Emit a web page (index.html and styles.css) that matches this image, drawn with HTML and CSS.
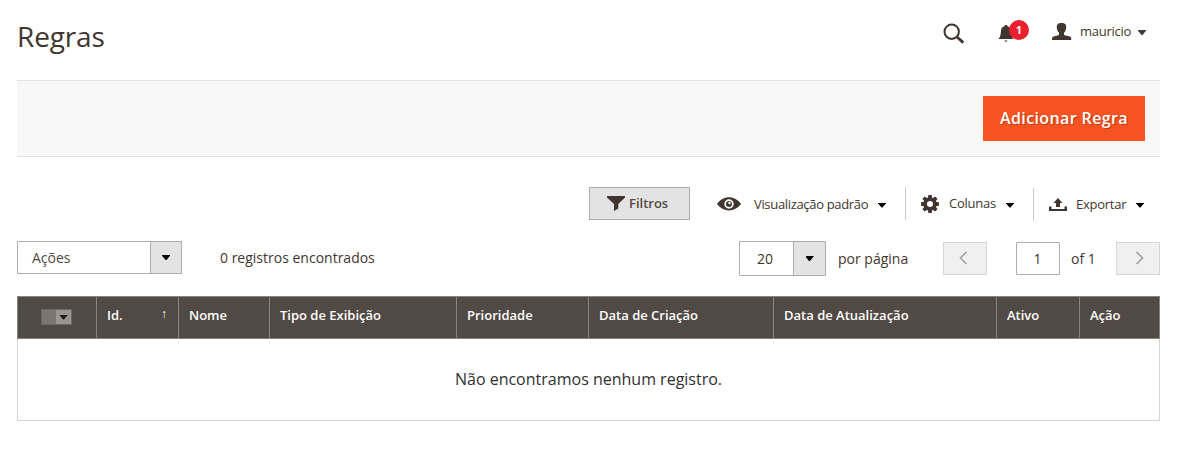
FILE: index.html
```html
<!DOCTYPE html>
<html lang="pt-BR">
<head>
<meta charset="utf-8">
<title>Regras</title>
<link rel="stylesheet" href="styles.css">
</head>
<body>
<div class="page">
  <header class="header">
    <h1 class="title">Regras</h1>
    <div class="tools">
      <svg class="search" width="22" height="22" viewBox="0 0 22 22"><circle cx="8.7" cy="8.7" r="7.2" fill="none" stroke="#41362f" stroke-width="2"/><path d="M14 14l6.300 5.600" stroke="#41362f" stroke-width="2.800"/></svg>
      <div class="bell">
        <svg width="16" height="18" viewBox="0 0 16 18"><path d="M6.500 1.200C6.500-.3 9.500-.3 9.500 1.200c2.800.6 3.500 2.400 3.700 5.100.2 3.700.8 5.700 2.300 7.700H.500c1.800-2 2.200-4 2.400-7.700.2-2.700.8-4.500 3.600-5.100zM6.300 15.500h3.200q-1.600 2.500-3.200 0z" fill="#41362f"/></svg>
        <span class="badge">1</span>
      </div>
      <svg class="avatar" width="20" height="18" viewBox="0 0 20 18"><path d="M9.500 0c3.800 0 5 2 4.700 4.800-.2 2.200-1 3.800-2.200 5v2c.5.8 3 .9 5.200 1.500 1.700.5 2.100 1.200 2.100 3.700H0c0-2.500.4-3.200 2-3.700 2.200-.6 4.600-.7 5-1.500v-2C5.800 8.600 5 7 4.800 4.800 4.500 2 5.700 0 9.500 0z" fill="#41362f"/></svg>
      <span class="user">mauricio</span>
      <i class="caret brown"></i>
    </div>
  </header>
  <div class="actions"><button class="primary">Adicionar Regra</button></div>
  <div class="controls">
    <button class="filters"><svg width="18" height="15" viewBox="0 0 18 15"><path d="M0 0h18v1.500L11.300 8v4.500L7 15V8L0 1.500z" fill="#41362f"/></svg><span>Filtros</span></button>
    <div class="control view">
      <svg width="24" height="14" viewBox="0 0 24 14"><path fill-rule="evenodd" d="M0 7C6-2 18-2 24 7 18 15.500 6 15.500 0 7zM12 2.300a4.700 4.700 0 1 0 0 9.400 4.700 4.700 0 0 0 0-9.400z" fill="#41362f"/><circle cx="12" cy="7" r="3" fill="#41362f"/><circle cx="12.500" cy="6" r="1.200" fill="#fff"/></svg>
      <span>Visualização padrão</span><i class="caret"></i>
    </div>
    <div class="control columns">
      <svg width="18" height="18" viewBox="0 0 18 18"><g fill="#41362f"><path id="tooth" d="M7.300 0h3.400l.5 4H6.800zM7.300 18h3.400l.5-4H6.800z"/><use href="#tooth" transform="rotate(45 9 9)"/><use href="#tooth" transform="rotate(90 9 9)"/><use href="#tooth" transform="rotate(135 9 9)"/></g><circle cx="9" cy="9" r="4.900" fill="none" stroke="#41362f" stroke-width="3.800"/></svg>
      <span>Colunas</span><i class="caret"></i>
    </div>
    <div class="control export">
      <svg width="18" height="14" viewBox="0 0 18 14"><path d="M9 0l4.500 5H11v4H7V5H4.500zM0 8.500h2.500V11h13V8.500H18V13H0z" fill="#41362f"/></svg>
      <span>Exportar</span><i class="caret"></i>
    </div>
  </div>
  <div class="paging">
    <div class="select bulk"><span class="value">Ações</span><span class="arrow"><i class="caret"></i></span></div>
    <span class="count">0 registros encontrados</span>
    <div class="select size"><span class="value">20</span><span class="arrow"><i class="caret"></i></span></div>
    <span class="per">por página</span>
    <button class="step prev"><svg width="9" height="14" viewBox="0 0 9 14"><path d="M7.500 1L1.500 7l6 6" fill="none" stroke="#a5a2a0" stroke-width="1.700"/></svg></button>
    <div class="current">1</div>
    <span class="total">of 1</span>
    <button class="step next"><svg width="9" height="14" viewBox="0 0 9 14"><path d="M1.500 1l6 6-6 6" fill="none" stroke="#a5a2a0" stroke-width="1.700"/></svg></button>
  </div>
  <div class="grid">
    <div class="head">
      <div class="th check"><span class="multi"><span><i class="caret"></i></span></span></div>
      <div class="th sorted"><span>Id.</span><span class="sort">↑</span></div>
      <div class="th">Nome</div>
      <div class="th">Tipo de Exibição</div>
      <div class="th">Prioridade</div>
      <div class="th">Data de Criação</div>
      <div class="th">Data de Atualização</div>
      <div class="th">Ativo</div>
      <div class="th">Ação</div>
    </div>
    <div class="empty"><span>Não encontramos nenhum registro.</span></div>
  </div>
</div>
</body>
</html>
```
FILE: styles.css
```css
* { box-sizing: border-box; }
body { margin: 0; background: #fff; color: #41362f; font: 14px "Open Sans", "Noto Sans", sans-serif; white-space: nowrap; }
button { font: inherit; color: inherit; margin: 0; padding: 0; border-radius: 0; }
svg { display: block; flex: none; }
.page { width: 1143px; margin-left: 17px; }
.caret { flex: none; width: 8px; height: 5px; background: #000; clip-path: polygon(0 0, 100% 0, 100% 15%, 56% 100%, 44% 100%, 0 15%); }
.caret.brown { background: #41362f; }

.header { display: flex; justify-content: space-between; height: 80px; }
.title { margin: 16px 0 0; font-size: 28px; line-height: 40px; font-weight: 400; letter-spacing: -.15px; }
.tools { display: flex; align-items: flex-start; width: 217px; }
.search { margin-top: 23px; }
.bell { position: relative; margin: 25px 0 0 33px; }
.badge { position: absolute; left: 11px; top: -5px; width: 20px; height: 20px; border-radius: 50%; background: #eb202e; color: #fff; font-size: 11px; font-weight: 700; line-height: 20px; text-align: center; }
.avatar { margin: 23px 0 0 38px; }
.user { width: 51px; margin: 22px 7px 0 8px; font-size: 13px; line-height: 18px; letter-spacing: -.25px; }
.tools .caret { margin-top: 30px; }

.actions { display: flex; justify-content: flex-end; height: 77px; padding: 15px 15px 0 0; border: solid #e3e3e3; border-width: 1px 0; background: #f8f8f8; }
.primary { width: 162px; height: 45px; padding-bottom: 2px; border: 0; background: #f55321; color: #fff; font-size: 16px; font-weight: 600; letter-spacing: .38px; text-shadow: 1px 1px 0 rgba(0,0,0,.25); }

.controls { display: flex; height: 84px; padding: 30px 0 0 572px; font-size: 13px; }
.filters { display: flex; align-items: center; width: 101px; height: 33px; padding-left: 17px; border: 1px solid #adadad; background: #e3e3e3; color: #514943; font-weight: 600; }
.filters span { margin: -2px 0 0 4px; }
.control { display: flex; align-items: center; height: 33px; }
.control span { flex: none; line-height: 18px; letter-spacing: -.25px; }
.view { width: 215px; padding-left: 27px; }
.view span { width: 114px; margin: 0 10px 0 13px; letter-spacing: -.33px; }
.view .caret, .columns .caret { margin-top: 3px; }
.export .caret { margin-top: 1px; }
.columns { width: 128px; padding-left: 15px; border-left: 1px solid #ccc; }
.columns span { width: 47px; margin: -2px 10px 0; }
.export { padding-left: 15px; margin-top: 1px; border-left: 1px solid #ccc; }
.export span { width: 50px; margin: -2px 10px 0 9px; }

.paging { display: flex; height: 55px; }
.select { display: flex; border: 1px solid #adadad; flex: none; }
.value { display: flex; align-items: center; flex: 1; }
.arrow { display: flex; align-items: center; justify-content: center; width: 31px; border-left: 1px solid #adadad; background: #e3e3e3; }
.bulk { width: 165px; height: 33px; }
.bulk .value { padding-left: 14px; color: #514943; }
.count { width: 155px; margin: 7px 364px 0 38px; line-height: 20px; }
.size { width: 87px; height: 35px; border-radius: 1px; }
.size .value { padding-left: 17px; }
.size .arrow { width: 32px; }
.per { width: 71px; margin: 8px 34px 0 12px; line-height: 20px; }
.step { display: flex; justify-content: center; width: 44px; height: 33px; margin-top: 1px; padding-top: 8px; border: 1px solid #d6d6d6; background: #f0f0f0; }
.prev svg { margin-right: 3px; }
.next svg { margin-left: 2px; }
.current { width: 44px; height: 33px; margin: 1px 0 0 29px; padding-right: 1px; border: 1px solid #adadad; border-radius: 1px; line-height: 32px; text-align: center; }
.total { width: 25px; margin: 8px 20px 0 11px; line-height: 20px; }

.head { display: grid; grid-template-columns: 79px 82px 91px 187px 132px 185px 223px 83px 81px; height: 43px; border: solid #8a837f; border-width: 1px 0; background: #514943; color: #fff; font-size: 13px; font-weight: 600; }
.th { padding: 9px 0 0 10px; border-left: 1px solid #8a837f; line-height: 18px; }
.th:last-child { border-right: 1px solid #8a837f; }
.sorted { display: flex; justify-content: space-between; padding-right: 11px; }
.sort { font-size: 12px; font-weight: 400; line-height: 16px; }
.check { padding: 12px 0 0 23px; }
.multi { display: flex; justify-content: flex-end; width: 31px; height: 16px; border: 1px solid #6f6762; background: #7d7571; }
.multi span { display: flex; align-items: center; justify-content: center; width: 15px; background: #9b9592; }
.multi .caret { background: #1d1a18; }
.empty { display: flex; justify-content: center; height: 82px; padding-top: 28px; border: solid #d6d6d6; border-width: 0 1px 1px; color: #303030; font-size: 16px; line-height: 24px; }
```
